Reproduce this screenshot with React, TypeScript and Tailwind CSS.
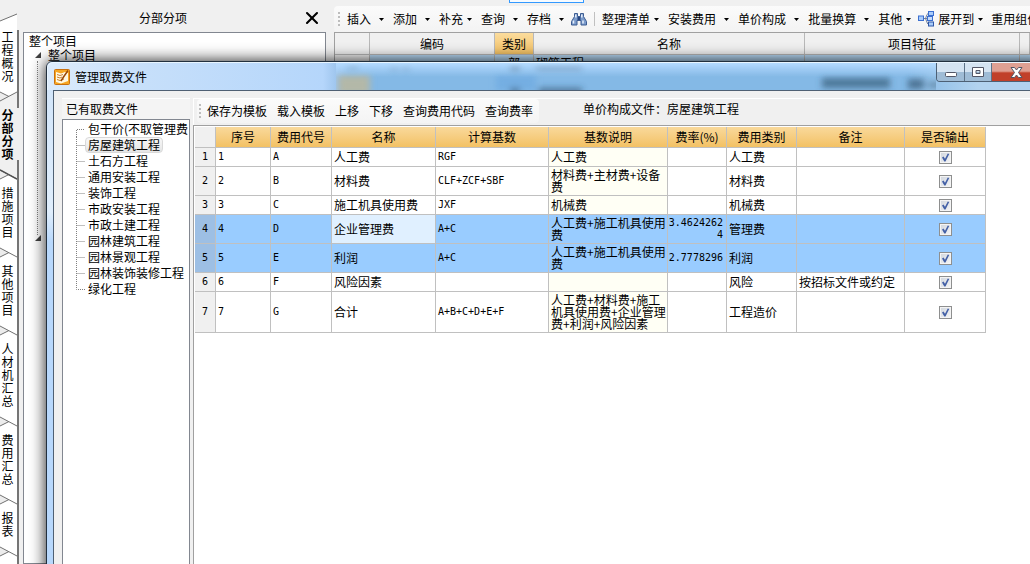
import React from "react";
import { X } from "lucide-react";

const sections = [
  "工程概况",
  "分部分项",
  "措施项目",
  "其他项目",
  "人材机汇总",
  "费用汇总",
  "报表",
  "管理",
];

const mainMenu = [
  { label: "插入", gap: "gap-2 mr-[9px]" },
  { label: "添加", gap: "gap-2 mr-[9px]" },
  { label: "补充", gap: "gap-1 mr-[9px]" },
  { label: "查询", gap: "gap-2 mr-[9px]" },
  { label: "存档", gap: "gap-2 mr-[7px]" },
];

const pricingMenu = [
  { label: "整理清单", gap: "gap-1 mr-[9px]" },
  { label: "安装费用", gap: "gap-2 mr-[9px]" },
  { label: "单价构成", gap: "gap-2 mr-[9px]" },
  { label: "批量换算", gap: "gap-2 mr-[9px]" },
  { label: "其他", gap: "gap-1 mr-[7px]" },
];

const feeFiles = [
  "包干价(不取管理费",
  "房屋建筑工程",
  "土石方工程",
  "通用安装工程",
  "装饰工程",
  "市政安装工程",
  "市政土建工程",
  "园林建筑工程",
  "园林景观工程",
  "园林装饰装修工程",
  "绿化工程",
];

const commands = ["保存为模板", "载入模板", "上移", "下移", "查询费用代码", "查询费率"];

const columns = [
  "序号",
  "费用代号",
  "名称",
  "计算基数",
  "基数说明",
  "费率(%)",
  "费用类别",
  "备注",
  "是否输出",
];

type Fee = {
  code: string;
  name: string;
  base: string;
  note: string[];
  rate: string[];
  kind: string;
  remark?: string;
  height: string;
  selected?: boolean;
};

const fees: Fee[] = [
  { code: "A", name: "人工费", base: "RGF", note: ["人工费"], rate: [], kind: "人工费", height: "h-[19px]" },
  { code: "B", name: "材料费", base: "CLF+ZCF+SBF", note: ["材料费+主材费+设备", "费"], rate: [], kind: "材料费", height: "h-[29px]" },
  { code: "C", name: "施工机具使用费", base: "JXF", note: ["机械费"], rate: [], kind: "机械费", height: "h-[19px]" },
  { code: "D", name: "企业管理费", base: "A+C", note: ["人工费+施工机具使用", "费"], rate: ["3.4624262", "4"], kind: "管理费", height: "h-[29px]", selected: true },
  { code: "E", name: "利润", base: "A+C", note: ["人工费+施工机具使用", "费"], rate: ["2.7778296"], kind: "利润", height: "h-[29px]", selected: true },
  { code: "F", name: "风险因素", base: "", note: [], rate: [], kind: "风险", remark: "按招标文件或约定", height: "h-[19px]" },
  { code: "G", name: "合计", base: "A+B+C+D+E+F", note: ["人工费+材料费+施工", "机具使用费+企业管理", "费+利润+风险因素"], rate: [], kind: "工程造价", height: "h-[41px]" },
];

function Caret() {
  return (
    <svg width="5" height="3" viewBox="0 0 5 3" aria-hidden="true">
      <path d="M0 0h5L2.5 3z" fill="#000" />
    </svg>
  );
}

function Grip() {
  return (
    <svg width="2" height="14" viewBox="0 0 2 14" className="shrink-0" aria-hidden="true">
      {[0, 4, 8, 12].map((y) => (
        <rect key={y} y={y} width="2" height="2" fill="#bdbdbd" />
      ))}
    </svg>
  );
}

function MenuButton({ label, gap }: { label: string; gap: string }) {
  return (
    <button className={"flex shrink-0 items-center whitespace-nowrap " + gap}>
      {label}
      <Caret />
    </button>
  );
}

function Binoculars() {
  return (
    <svg width="16" height="15" viewBox="0 0 16 15" aria-hidden="true">
      <path d="M3.500 1.500h3v3h3v-3h3v3l3 5v3.500h-5.500V8.500H6V13H.5V9.500l3-5z" fill="#7b9bcb" stroke="#3c5c92" />
      <path d="M2.500 8.500v3M12 8.500v3M4.800 2.500v3M10.800 2.500v3" stroke="#e6effb" strokeWidth="1.500" />
      <path d="M6.500 5h3v3h-3z" fill="#274680" />
    </svg>
  );
}

function ExpandIcon() {
  return (
    <svg width="16" height="16" viewBox="0 0 16 16" className="shrink-0" aria-hidden="true">
      <path d="M6 7.500h3M9 3.500L7.500 7.500 9.500 12.500M9 3h2M9 12.500h2" stroke="#6f7f9c" fill="none" />
      <rect x=".5" y="5" width="5" height="4.500" fill="#a9ccfa" stroke="#3b6fd0" />
      <rect x="10.500" y=".5" width="5" height="4" fill="#a9ccfa" stroke="#3b6fd0" />
      <rect x="9.500" y="5.500" width="5" height="4" fill="#c5dcfb" stroke="#3b6fd0" />
      <rect x="10.500" y="11" width="5" height="4" fill="#a9ccfa" stroke="#2f56a6" />
    </svg>
  );
}

function AppIcon() {
  return (
    <svg width="16" height="16" viewBox="0 0 16 16" className="shrink-0" aria-hidden="true">
      <rect x=".5" y=".5" width="15" height="15" rx="1" fill="#f6a623" stroke="#c9700f" />
      <path d="M2 3l5 1.500L11 3l3 1v8l-7 2.500L2 13z" fill="#fff8e2" />
      <path d="M3 5.500l3 1 3-1M3 8l3 1 2-1M3 10.500l3 1 4-1.500" stroke="#c98032" fill="none" />
      <path d="M14 1.500L9.500 8 7 12" stroke="#9a4a0a" strokeWidth="1.500" fill="none" />
    </svg>
  );
}

function Separator({ kind }: { kind: "rise" | "fall" | "fallActive" }) {
  return (
    <svg width="17" height="26" viewBox="0 0 17 26" className="block shrink-0" aria-hidden="true">
      {kind === "rise" && <path d="M0 19L17 10V26H0z" fill="#f0f0f0" />}
      {kind === "fallActive" && <path d="M0 0H17V19L0 10z" fill="#f0f0f0" />}
      <path d="M0 10l9 4.500L0 19z" fill="#ececec" />
      {kind === "rise" ? (
        <path d="M0 19L17 10M0 10l9 4.500" stroke="#707070" fill="none" />
      ) : (
        <path d="M0 10l17 9M0 19l9-4.500" stroke="#707070" fill="none" />
      )}
      {kind === "fallActive" && <path d="M0 10l17 9" stroke="#505050" strokeWidth="1.500" />}
    </svg>
  );
}

function SectionTabs() {
  return (
    <nav className="flex w-[19px] shrink-0 flex-col overflow-hidden pt-1">
      <svg width="17" height="26" viewBox="0 0 17 26" className="block shrink-0" aria-hidden="true">
        <path d="M0 17L17 10V26H0z" fill="#fff" />
        <path d="M0 17L17 10" stroke="#707070" />
      </svg>
      {sections.map((name, i) => (
        <React.Fragment key={name}>
          <div className={i === 1 ? "flex w-[19px] shrink-0 bg-[#f0f0f0]" : "flex w-[19px] shrink-0 border-r-2 border-[#757575] bg-white"}>
            <button className={i === 1 ? "w-[15px] text-center leading-[13px] font-bold break-all" : "w-[15px] text-center leading-[13px] break-all"}>
              {name}
            </button>
          </div>
          <div className="flex w-[19px] shrink-0 border-r-2 border-[#757575] bg-white">
            <Separator kind={i === 0 ? "rise" : i === 1 ? "fallActive" : "fall"} />
          </div>
        </React.Fragment>
      ))}
    </nav>
  );
}

function ProjectTree() {
  return (
    <section className="ml-1 flex w-[303px] shrink-0 flex-col">
      <header className="flex h-8 items-center pt-1">
        <h2 className="flex-1 pl-[116px]">分部分项</h2>
        <button aria-label="关闭" className="mr-1">
          <X size={20} strokeWidth={2.5} color="#000" />
        </button>
      </header>
      <div className="flex flex-1 flex-col border border-[#828790] bg-white">
        <div className="h-4 pl-[5px] leading-4">整个项目</div>
        <div className="flex h-3 items-center pl-[11px] leading-3">
          <svg width="6" height="6" viewBox="0 0 6 6" aria-hidden="true">
            <path d="M6 0v6H0z" fill="#404040" />
          </svg>
          <span className="pl-[7px]">整个项目</span>
        </div>
        <div className="ml-[13px] h-[174px] border-l border-dotted border-[#808080]" />
        <svg width="6" height="6" viewBox="0 0 6 6" className="ml-[11px]" aria-hidden="true">
          <path d="M6 0v6H0z" fill="#404040" />
        </svg>
      </div>
    </section>
  );
}

function ItemGrid() {
  return (
    <section className="ml-2 flex min-w-0 flex-1 flex-col">
      <div className="mt-1.5 flex h-[26px] items-center overflow-hidden rounded-l bg-linear-to-b from-[#fbfbfb] to-[#f3f3f3] pl-1">
        <Grip />
        <div className="flex items-center pl-[7px]">
          {mainMenu.map((m) => (
            <MenuButton key={m.label} {...m} />
          ))}
          <button aria-label="查找" className="shrink-0">
            <Binoculars />
          </button>
          <span className="mx-[7px] h-3.5 w-px shrink-0 bg-[#c0c0c0]" />
          {pricingMenu.map((m) => (
            <MenuButton key={m.label} {...m} />
          ))}
          <ExpandIcon />
          <MenuButton label="展开到" gap="ml-1 gap-1 mr-2" />
          <button className="shrink-0 whitespace-nowrap">重用组价</button>
        </div>
      </div>
      <div className="flex-1 overflow-hidden border-t border-l border-[#a0a0a0] bg-white">
        <table className="w-full table-fixed border-separate border-spacing-0 [&_td]:p-0 [&_th]:p-0">
          <colgroup>
            <col className="w-[35px]" />
            <col className="w-[125px]" />
            <col className="w-[39px]" />
            <col className="w-[271px]" />
            <col className="w-[215px]" />
            <col />
          </colgroup>
          <thead>
            <tr className="h-[22px] bg-[#f0f0f0] [&>th]:border-r [&>th]:border-b [&>th]:border-[#b8b8b8] [&>th]:font-normal">
              <th />
              <th>编码</th>
              <th className="bg-linear-to-b from-[#fbdc9d] to-[#f3c163]">类别</th>
              <th>名称</th>
              <th>项目特征</th>
              <th />
            </tr>
          </thead>
          <tbody>
            <tr className="h-4 bg-[#b9dcf8] text-center">
              <td className="border-r border-[#b8b8b8] bg-[#f0f0f0]" />
              <td className="border-r border-[#b8b8b8]" />
              <td className="border-r border-[#b8b8b8]">部</td>
              <td className="border-r border-[#b8b8b8] text-left">
                <span className="pl-0.5">砌筑工程</span>
              </td>
              <td className="border-r border-[#b8b8b8]" />
              <td />
            </tr>
          </tbody>
        </table>
      </div>
    </section>
  );
}

function WindowButtons() {
  return (
    <div className="mr-1 flex h-[19px] overflow-hidden rounded-b border border-t-0 border-[#4d6075]">
      <button aria-label="最小化" className="flex w-7 items-center justify-center border-r border-[#5d7389] bg-linear-to-b from-[#d5e4f2] from-50% to-[#9fbcd6] to-50%">
        <svg width="12" height="5" viewBox="0 0 12 5" className="mt-1" aria-hidden="true">
          <rect x=".5" y=".5" width="11" height="4" rx="1" fill="#fff" stroke="#535666" />
        </svg>
      </button>
      <button aria-label="最大化" className="flex w-[27px] items-center justify-center border-r border-[#5d7389] bg-linear-to-b from-[#d5e4f2] from-50% to-[#9fbcd6] to-50%">
        <svg width="12" height="10" viewBox="0 0 12 10" aria-hidden="true">
          <path fillRule="evenodd" d="M.5.5h11v9H.5zM4 3.500v3h4v-3z" fill="#fff" stroke="#535666" />
        </svg>
      </button>
      <button aria-label="关闭窗口" className="flex w-12 items-center justify-center bg-linear-to-b from-[#dfa093] from-45% to-[#c1402a] to-55%">
        <svg width="13" height="11" viewBox="0 0 13 11" aria-hidden="true">
          <path d="M1 .5h3.500l2 2.500 2-2.500H12L8.500 5.500l3.500 5H8.500l-2-2.500-2 2.500H1l3.500-5z" fill="#fff" stroke="#535666" />
        </svg>
      </button>
    </div>
  );
}

function FeeFileTree() {
  return (
    <aside className="flex w-32 shrink-0 flex-col">
      <h3 className="h-[21px] border-t border-white bg-[#f4f4f4] pl-1 leading-5">已有取费文件</h3>
      <ul className="flex-1 overflow-hidden border border-[#828790] bg-white pt-px">
        {feeFiles.map((f, i) => (
          <li key={f} className="flex h-4 items-center pl-[13px]">
            <svg width="9" height="16" viewBox="0 0 9 16" className="shrink-0" aria-hidden="true">
              <path
                d={i === 0 ? "M.5 16V8.500H9" : i === feeFiles.length - 1 ? "M.5 0V8.500H9" : "M.5 0V16M.5 8.500H9"}
                stroke="#808080"
                strokeDasharray="1 1"
                fill="none"
              />
            </svg>
            <button
              className={
                i === 1
                  ? "rounded-sm border border-[#d9d9d9] bg-linear-to-b from-[#f8f8f8] to-[#e5e5e5] px-0.5 leading-[14px] whitespace-nowrap"
                  : "px-[3px] leading-4 whitespace-nowrap"
              }
            >
              {f}
            </button>
          </li>
        ))}
      </ul>
    </aside>
  );
}

function Lines({ items }: { items: string[] }) {
  return (
    <>
      {items.map((t, i) => (
        <span key={i} className="block">
          {t}
        </span>
      ))}
    </>
  );
}

function FeeTable() {
  return (
    <table className="w-[791px] table-fixed border-separate border-spacing-0 leading-3 whitespace-nowrap [&_td]:border-r [&_td]:border-b [&_td]:border-[#c0c0c0] [&_td]:p-0 [&_th]:border-r [&_th]:border-b [&_th]:border-[#c0c0c0] [&_th]:p-0 [&_th]:font-normal">
      <colgroup>
        <col className="w-[21px]" />
        <col className="w-[55px]" />
        <col className="w-[61px]" />
        <col className="w-[104px]" />
        <col className="w-[113px]" />
        <col className="w-[119px]" />
        <col className="w-[59px]" />
        <col className="w-[70px]" />
        <col className="w-[108px]" />
        <col className="w-[81px]" />
      </colgroup>
      <thead>
        <tr className="h-[21px]">
          <th className="bg-[#f0f0f0]" />
          {columns.map((c) => (
            <th key={c} className="bg-linear-to-b from-[#f9d99b] to-[#f3c163]">
              {c}
            </th>
          ))}
        </tr>
      </thead>
      <tbody>
        {fees.map((f, i) => {
          const mono = "font-['DejaVu_Sans_Mono','Noto_Sans_CJK_SC',monospace] text-[10px]";
          return (
            <tr key={f.code} className={f.height + (f.selected ? " bg-[#99ccff]" : " bg-white")}>
              <th className={mono + (f.selected ? " bg-[#9dbfe4]" : " bg-[#f0f0f0]")}>{i + 1}</th>
              <td className={mono}>
                <div className="pl-0.5">{i + 1}</div>
              </td>
              <td className={mono}>
                <div className="pl-0.5">{f.code}</div>
              </td>
              <td className={i === 3 ? "bg-[#e0f0ff]" : ""}>
                <div className="pl-0.5">{f.name}</div>
              </td>
              <td className={mono}>
                <div className="pl-0.5">{f.base}</div>
              </td>
              <td className={f.selected ? "" : "bg-[#fffff5]"}>
                <div className="pl-0.5">
                  <Lines items={f.note} />
                </div>
              </td>
              <td className={mono + " text-right"}>
                <div className="pr-[3px]">
                  <Lines items={f.rate} />
                </div>
              </td>
              <td>
                <div className="pl-0.5">{f.kind}</div>
              </td>
              <td>
                <div className="pl-0.5">{f.remark}</div>
              </td>
              <td>
                <label className="relative mx-auto block h-[13px] w-[13px]">
                  <input
                    type="checkbox"
                    defaultChecked
                    aria-label={"是否输出 " + f.name}
                    className="peer block h-[13px] w-[13px] appearance-none border border-[#8e8f8f] bg-linear-to-br from-[#cfd5dd] to-[#f6f6f6] shadow-[inset_0_0_0_1px_#f4f4f4]"
                  />
                  <svg width="13" height="13" viewBox="0 0 13 13" className="pointer-events-none absolute inset-0 hidden peer-checked:block" aria-hidden="true">
                    <path d="M3 6.500l1.500-1L6 7.800 8.800 2.500l1.400.4L6.500 10.500H5.300z" fill="#4360a6" />
                  </svg>
                </label>
              </td>
            </tr>
          );
        })}
      </tbody>
    </table>
  );
}

function FeeDialog() {
  return (
    <div
      role="dialog"
      aria-label="管理取费文件"
      className="absolute top-[61px] -right-4 -bottom-4 left-[46px] flex flex-col rounded-t-md border border-[#22303e] bg-[linear-gradient(180deg,#cfe3f9_0,#e0eefc_150px,#b8d8fc_180px)] shadow-[0_0_16px_rgba(0,0,0,0.9)]"
    >
      <header className="flex h-7 shrink-0 items-start overflow-hidden rounded-t-md border-t border-l border-[#e8f5ff] bg-[linear-gradient(90deg,#dcebfb_0,#c6dffa_100px,#b5d6fb_275px,#9fc6ee_288px,#84b9e6_300px,#84b9e6_860px,#b2d2ef_930px)]">
        <div className="flex w-[288px] shrink-0 items-center pt-1 pl-1.5">
          <AppIcon />
          <h1 className="pl-[5px] leading-5">管理取费文件</h1>
        </div>
        <svg height="28" className="min-w-0 flex-1" aria-hidden="true">
          <defs>
            <filter id="haze" x="-30%" y="-80%" width="160%" height="260%">
              <feGaussianBlur stdDeviation="3" />
            </filter>
            <linearGradient id="sheen" x2="0" y2="1">
              <stop offset="0" stopColor="#b4daff" />
              <stop offset="1" stopColor="#b4daff" stopOpacity="0" />
            </linearGradient>
          </defs>
          <g filter="url(#haze)">
            <rect x="2" y="12" width="32" height="20" fill="#b3b8a8" />
            <rect x="12" y="-3" width="10" height="8" fill="#3f5c78" opacity=".7" />
            <rect x="54" y="-1" width="8" height="8" fill="#54789c" opacity=".6" />
            <rect x="66" y="-1" width="8" height="8" fill="#54789c" opacity=".6" />
            <rect x="160" y="12" width="40" height="16" fill="#74aee2" />
            <rect x="174" y="-2" width="10" height="9" fill="#26455f" opacity=".8" />
            <rect x="200" y="-2" width="46" height="8" fill="#26455f" opacity=".7" />
            <rect x="174" y="25" width="10" height="6" fill="#26455f" opacity=".6" />
            <rect x="202" y="25" width="44" height="6" fill="#26455f" opacity=".6" />
            <rect x="486" y="15" width="68" height="10" fill="#33566f" opacity=".65" />
            <rect x="572" y="16" width="16" height="10" fill="#33566f" opacity=".7" />
            <rect x="592" y="19" width="40" height="6" fill="#33566f" opacity=".5" />
          </g>
          <rect width="100%" height="14" fill="url(#sheen)" />
        </svg>
        <WindowButtons />
      </header>
      <div className="ml-1.5 flex min-h-0 flex-1 border-t border-l border-[#4f6073] bg-[#f0f0f0] pt-[7px] pl-2">
        <FeeFileTree />
        <section className="ml-[3px] flex min-w-0 flex-1 flex-col border-t border-white">
          <div className="flex h-[26px] shrink-0 items-start border-l border-white">
            <div role="toolbar" aria-label="取费文件" className="ml-[3px] flex h-6 items-center gap-2.5 rounded bg-linear-to-b from-[#fbfbfb] to-[#f4f4f4] pr-1.5 pl-0.5">
              <Grip />
              {commands.map((c, i) => (
                <button key={c} className={i === 0 ? "-ml-1 whitespace-nowrap" : "whitespace-nowrap"}>
                  {c}
                </button>
              ))}
            </div>
            <p className="ml-11 leading-5 whitespace-nowrap">单价构成文件：房屋建筑工程</p>
          </div>
          <div className="min-h-0 flex-1 overflow-hidden border-t border-l border-[#a0a0a0] bg-white pt-px pl-px">
            <FeeTable />
          </div>
        </section>
      </div>
    </div>
  );
}

export default function App() {
  return (
    <main className="relative flex h-screen overflow-hidden bg-[#f0f0f0] font-['Noto_Sans_CJK_SC',sans-serif] text-xs leading-4 text-black">
      <SectionTabs />
      <ProjectTree />
      <ItemGrid />
      <div className="absolute top-0 left-[509px] h-[3px] w-[75px] border border-t-0 border-[#3399ff] bg-[#f7fbff]" />
      <FeeDialog />
    </main>
  );
}
